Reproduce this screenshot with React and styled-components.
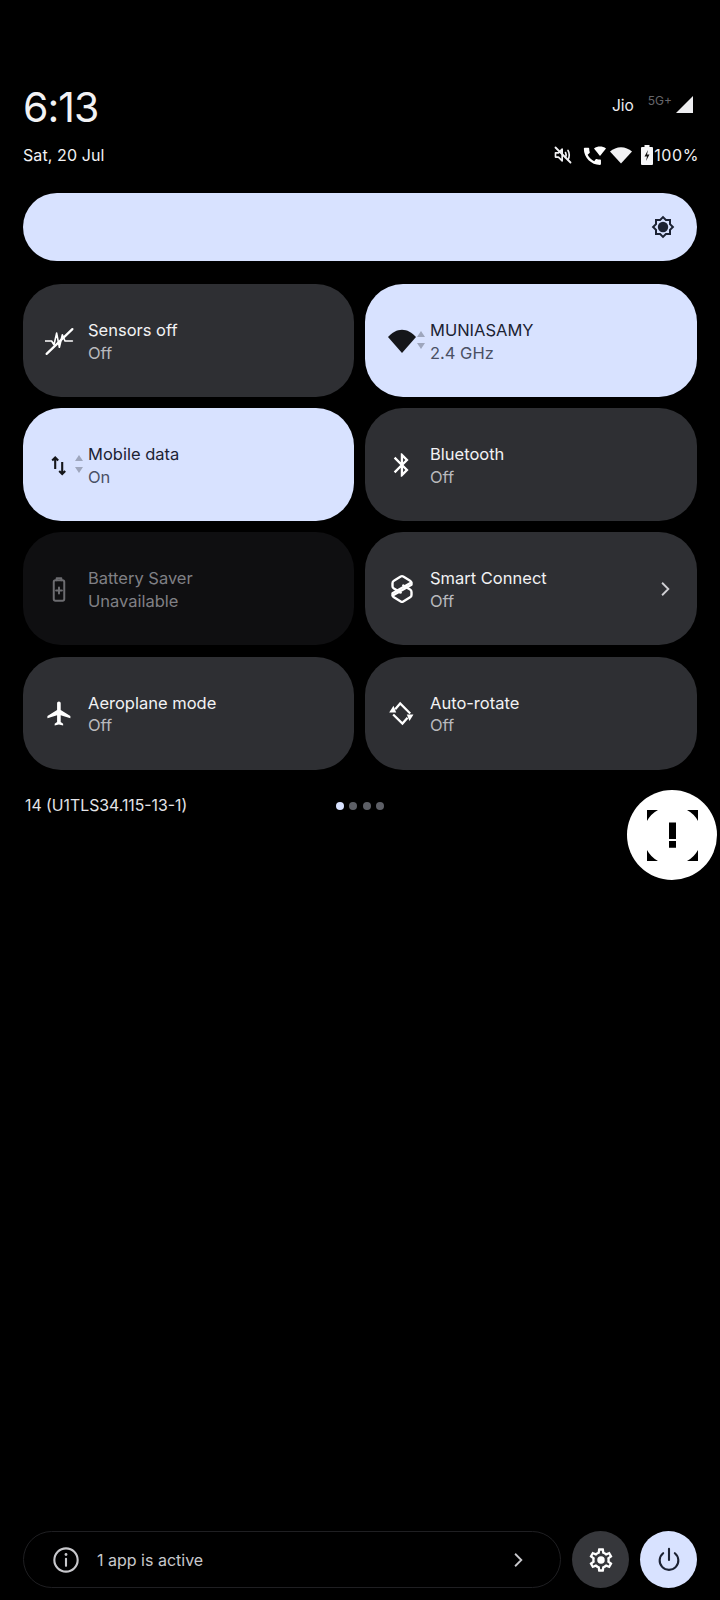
import React from 'react'
import styled, { createGlobalStyle } from 'styled-components'

const Global = createGlobalStyle`
    html, body { margin: 0; background: #000; }
    * { box-sizing: border-box; }
`;

const Page = styled.div`
    position: relative;
    width: 720px;
    height: 1600px;
    padding: 82px 23px 12px;
    display: flex;
    flex-direction: column;
    background: #000;
    font-family: Inter, "Liberation Sans", sans-serif;
    color: #f2f2f4;
`;

const TopRow = styled.div`
    display: flex;
    justify-content: space-between;
    align-items: center;
    height: 50px;
`;
const Clock = styled.div`
    font-size: 41px;
    letter-spacing: -1px;
    line-height: 50px;
    font-weight: 400;
`;
const Carrier = styled.div`
    display: flex;
    align-items: flex-start;
    height: 36px;
    color: #eeeef0;
    font-size: 15.5px;
    padding-top: 7px;
    margin-right: 4px;
`;
const CarrierName = styled.span`
    line-height: 20px;
`;
const NetType = styled.span`
    font-size: 12px;
    color: #66666a;
    margin: -3px 4px 0 14px;
`;
const SubRow = styled.div`
    display: flex;
    justify-content: space-between;
    align-items: center;
    height: 24px;
    margin-top: 11px;
`;
const DateText = styled.div`
    font-size: 16px;
    letter-spacing: 0.1px;
`;
const StatusIcons = styled.div`
    display: flex;
    align-items: center;
    margin-right: -2px;
`;
const BatteryText = styled.span`
    font-size: 16px;
    letter-spacing: 0.6px;
`;
const Brightness = styled.div`
    height: 68px;
    margin-top: 26px;
    border-radius: 34px;
    background: #d8e2ff;
    display: flex;
    align-items: center;
    justify-content: flex-end;
    padding-right: 22px;
    color: #1c2233;
`;
const Grid = styled.div`
    display: grid;
    grid-template-columns: 331px 332px;
    grid-auto-rows: 113px;
    column-gap: 11px;
    row-gap: 11.2px;
    margin-top: 23px;
`;

const tileBg = { off: '#2e2f33', on: '#d8e2ff', disabled: '#0f0f11' };
const tileTitle = { off: '#f2f2f4', on: '#1c2233', disabled: '#808085' };
const tileSub = { off: '#b9b9be', on: '#4a5064', disabled: '#808085' };
const tileIcon = { off: '#fff', on: '#15161a', disabled: '#6c6c70' };

const Tile = styled.div`
    position: relative;
    display: flex;
    align-items: center;
    border-radius: 38px;
    background: ${(p) => tileBg[p.$state]};
    color: ${(p) => tileTitle[p.$state]};
`;
const IconSlot = styled.div`
    position: relative;
    flex: 0 0 65px;
    padding-left: 22px;
    height: 28px;
    display: flex;
    align-items: center;
    color: ${(p) => tileIcon[p.$state]};
`;
const Steppers = styled.svg`
    position: absolute;
    left: 50px;
    top: 3px;
    width: 12px;
    height: 24px;
`;
const TileText = styled.div`
    flex: 1;
    font-size: 16.5px;
    line-height: 22.5px;
    margin-top: 2px;
`;
const TileSub = styled.div`
    color: ${(p) => tileSub[p.$state]};
`;
const TileChevron = styled.svg`
    margin-right: 22px;
    color: #d0d0d4;
`;
const VersionRow = styled.div`
    display: grid;
    grid-template-columns: 1fr auto 1fr;
    align-items: center;
    height: 24px;
    margin-top: 24px;
    padding-left: 2px;
`;
const Version = styled.div`
    font-size: 15.8px;
    color: #e4e4e8;
`;
const Dots = styled.div`
    display: flex;
    gap: 5.5px;
    margin-left: -2px;
`;
const Dot = styled.span`
    width: 8px;
    height: 8px;
    border-radius: 50%;
    background: ${(p) => (p.$on ? '#d8e2ff' : '#5d5f66')};
`;
const FloatButton = styled.div`
    position: absolute;
    left: 627px;
    top: 790px;
    width: 90px;
    height: 90px;
    border-radius: 50%;
    background: #fff;
    display: flex;
    align-items: center;
    justify-content: center;
`;
const Footer = styled.div`
    margin-top: auto;
    display: flex;
    align-items: center;
    gap: 11px;
`;
const ActivePill = styled.div`
    flex: 1;
    height: 57px;
    border: 1.5px solid #1f1f22;
    border-radius: 29px;
    display: flex;
    align-items: center;
    padding: 0 32px 0 28px;
    color: #c8c8cc;
    font-size: 16px;
`;
const PillText = styled.span`
    flex: 1;
    margin-left: 17px;
`;
const RoundButton = styled.div`
    width: 57px;
    height: 57px;
    border-radius: 50%;
    background: ${(p) => (p.$on ? '#d8e2ff' : '#36373b')};
    color: ${(p) => (p.$on ? '#1c2233' : '#fff')};
    display: flex;
    align-items: center;
    justify-content: center;
`;

const Ico = ({ size = 24, children, ...rest }) => (
    <svg width={size} height={size} viewBox="0 0 24 24" fill="currentColor" {...rest}>{children}</svg>
);
const Line = ({ size = 24, width = 2, children, ...rest }) => (
    <svg width={size} height={size} viewBox="0 0 24 24" fill="none" stroke="currentColor" strokeWidth={width} strokeLinecap="round" strokeLinejoin="round" {...rest}>{children}</svg>
);

const GEAR = "M19.43 12.98c.04-.32.07-.64.07-.98 0-.34-.03-.66-.07-.98l2.11-1.65c.19-.15.24-.42.12-.64l-2-3.46c-.09-.16-.26-.25-.44-.25-.06 0-.12.01-.17.03l-2.49 1c-.52-.4-1.08-.73-1.69-.98l-.38-2.65C14.46 2.18 14.25 2 14 2h-4c-.25 0-.46.18-.49.42l-.38 2.65c-.61.25-1.17.59-1.69.98l-2.49-1c-.06-.02-.12-.03-.18-.03-.17 0-.34.09-.43.25l-2 3.46c-.13.22-.07.49.12.64l2.11 1.65c-.04.32-.07.65-.07.98 0 .33.03.66.07.98l-2.11 1.65c-.19.15-.24.42-.12.64l2 3.46c.09.16.26.25.44.25.06 0 .12-.01.17-.03l2.49-1c.52.4 1.08.73 1.69.98l.38 2.65c.03.24.24.42.49.42h4c.25 0 .46-.18.49-.42l.38-2.65c.61-.25 1.17-.59 1.69-.98l2.49 1c.06.02.12.03.18.03.17 0 .34-.09.43-.25l2-3.46c.12-.22.07-.49-.12-.64l-2.11-1.65zm-1.98-1.71c.04.31.05.52.05.73 0 .21-.02.43-.05.73l-.14 1.13.89.7 1.08.84-.7 1.21-1.27-.51-1.04-.42-.9.68c-.43.32-.84.56-1.25.73l-1.06.43-.16 1.13-.2 1.35h-1.4l-.19-1.35-.16-1.13-1.06-.43c-.43-.18-.83-.41-1.23-.71l-.91-.7-1.06.43-1.27.51-.7-1.21 1.08-.84.89-.7-.14-1.13c-.03-.31-.05-.54-.05-.74s.02-.43.05-.73l.14-1.13-.89-.7-1.08-.84.7-1.21 1.27.51 1.04.42.9-.68c.43-.32.84-.56 1.25-.73l1.06-.43.16-1.13.2-1.35h1.39l.19 1.35.16 1.13 1.06.43c.43.18.83.41 1.23.71l.91.7 1.06-.43 1.27-.51.7 1.21-1.07.85-.89.7.14 1.13z";
const PHONE = "M20.01 15.38c-1.23 0-2.42-.2-3.53-.56-.35-.12-.74-.03-1.01.24l-1.57 1.97c-2.83-1.35-5.48-3.9-6.89-6.83l1.95-1.66c.27-.28.35-.67.24-1.02-.37-1.11-.56-2.3-.56-3.53 0-.54-.45-.99-.99-.99H4.19C3.65 3 3 3.24 3 3.99 3 13.28 10.73 21 20.01 21c.71 0 .99-.63.99-1.18v-3.45c0-.54-.45-.99-.99-.99z";

const SensorsIcon = () => (
    <Line size={30} width={1.3}>
        <path d="M0 12h5.3l1.9 3 2.1-9.3 2.2 11.3 2.4-10 2.1 5h5.9" />
        <path d="M1.3 22.3L21.9 2.5" strokeWidth={1.8} />
    </Line>
);
const WifiIcon = () => (
    <Ico size={30}><path d="M12 21.5L0.8 8.8C4 5.2 8 3 12 3s8 2.2 11.2 5.8z" /></Ico>
);
const DataIcon = () => (
    <Line size={24} width={2.1} strokeLinecap="butt" strokeLinejoin="miter">
        <path d="M10.2 16V4.5M7.2 7.5l3-3 3 3" />
        <path d="M17.2 9v12M14.2 18l3 3 3-3" />
    </Line>
);
const BluetoothIcon = () => (
    <Ico size={28}><path transform="translate(0.8 0)" d="M17.71 7.71L12 2h-1v7.59L6.41 5 5 6.41 10.59 12 5 17.59 6.41 19 11 14.41V22h1l5.71-5.71-4.3-4.29 4.3-4.29zM13 5.83l1.88 1.88L13 9.59V5.83zm1.88 10.46L13 18.17v-3.76l1.88 1.88z" /></Ico>
);
const BatterySaverIcon = () => (
    <Line size={28} width={1.7}>
        <rect x="7.5" y="4.5" width="9" height="17.5" rx="1.4" />
        <path d="M10 4.5V2.8h4v1.7" />
        <path d="M12 10.8v5M9.5 13.3h5" />
    </Line>
);
const LINK = "M11 14.8L5.5 11.6Q4.4 11 4.4 9.7V7.3Q4.4 6 5.5 5.4L11 2Q12 1.4 13 2L18.5 5.4Q19.6 6 19.6 7.3V8.6L4.6 17.2";
const SmartConnectIcon = () => (
    <Line size={30} width={1.9}>
        <path d={LINK} />
        <path d={LINK} transform="rotate(180 12 12)" />
    </Line>
);
const PlaneIcon = () => (
    <Ico size={29}><path d="M21 16v-2l-8-5V3.5c0-.83-.67-1.5-1.5-1.5S10 2.67 10 3.5V9l-8 5v2l8-2.5V19l-2 1.5V22l3.5-1 3.5 1v-1.5L13 19v-5.5l8 2.5z" /></Ico>
);
const RotateIcon = () => (
    <Line size={29} width={1.9} strokeLinecap="butt" strokeLinejoin="miter">
        <path d="M6.8 8.4L10.9 3.7 19.2 12" />
        <path d="M17 15.6L12.8 20.3 5.1 12.8" />
        <path d="M1.8 11.2h5.8L5.4 5.6z" fill="currentColor" stroke="none" />
        <path d="M21.9 12.8h-5.5l2.2 5.5z" fill="currentColor" stroke="none" />
    </Line>
);
const ChevronIcon = ({ size = 22, ...rest }) => (
    <Line size={size} width={2.2} strokeLinecap="butt" strokeLinejoin="miter" {...rest}><path d="M8.5 4.5l7.5 7.5-7.5 7.5" /></Line>
);

const tiles = [
    { title: 'Sensors off', sub: 'Off', state: 'off', Icon: SensorsIcon },
    { title: 'MUNIASAMY', sub: '2.4 GHz', state: 'on', Icon: WifiIcon, steppers: true },
    { title: 'Mobile data', sub: 'On', state: 'on', Icon: DataIcon, steppers: true },
    { title: 'Bluetooth', sub: 'Off', state: 'off', Icon: BluetoothIcon },
    { title: 'Battery Saver', sub: 'Unavailable', state: 'disabled', Icon: BatterySaverIcon },
    { title: 'Smart Connect', sub: 'Off', state: 'off', Icon: SmartConnectIcon, chevron: true },
    { title: 'Aeroplane mode', sub: 'Off', state: 'off', Icon: PlaneIcon },
    { title: 'Auto-rotate', sub: 'Off', state: 'off', Icon: RotateIcon },
];

function App() {
    return (
        <Page>
            <Global />
            <TopRow>
                <Clock>6:13</Clock>
                <Carrier>
                    <CarrierName>Jio</CarrierName>
                    <NetType>5G+</NetType>
                    <svg width="17" height="17" viewBox="0 0 18 18" fill="#eeeef0"><path d="M18 0v18H0z" /></svg>
                </Carrier>
            </TopRow>
            <SubRow>
                <DateText>Sat, 20 Jul</DateText>
                <StatusIcons>
                    <Line size={20} width={2} style={{ marginRight: 9 }}>
                        <path d="M3 9.5v5h3.5L11 19V5L6.5 9.5z" />
                        <path d="M15 9c1 1.8 1 4 0 6M18 6.5c2 3 2 8 0 11" />
                        <path d="M3 3l18 18" strokeWidth={2.2} />
                    </Line>
                    <svg width="26" height="22" viewBox="0 0 26 22" fill="#fff" style={{ marginRight: 1 }}>
                        <path d={PHONE} transform="translate(-1 1) scale(0.95)" />
                        <path d="M18 12L12 4.5c3.6-2.6 8.4-2.6 12 0z" />
                    </svg>
                    <Ico size={24} style={{ marginRight: 8, color: '#f2f2f4' }}><path d="M12 20.5L1 8.5C4 5.8 8 4.2 12 4.2s8 1.6 11 4.3z" /></Ico>
                    <svg width="12" height="20" viewBox="0 0 12 20" style={{ marginRight: 1 }}>
                        <path d="M3.5 0h5v2H11a1 1 0 0 1 1 1v16a1 1 0 0 1-1 1H1a1 1 0 0 1-1-1V3a1 1 0 0 1 1-1h2.5z" fill="#f6f6f8" />
                        <path d="M7 5L3.5 11.5H6L5 16l3.5-6.5H6z" fill="#111" />
                    </svg>
                    <BatteryText>100%</BatteryText>
                </StatusIcons>
            </SubRow>
            <Brightness>
                <Ico size={24}>
                    <path d="M20 8.69V4h-4.69L12 .69 8.69 4H4v4.69L.69 12 4 15.31V20h4.69L12 23.31 15.31 20H20v-4.69L23.31 12 20 8.69zm-2 5.79V18h-3.52L12 20.48 9.52 18H6v-3.52L3.52 12 6 9.52V6h3.52L12 3.52 14.48 6H18v3.52L20.48 12 18 14.48z" />
                    <circle cx="12" cy="12" r="5.2" />
                </Ico>
            </Brightness>
            <Grid>
                {tiles.map(({ title, sub, state, Icon, steppers, chevron }) => (
                    <Tile key={title} $state={state}>
                        <IconSlot $state={state}>
                            <Icon />
                            {steppers && (
                                <Steppers viewBox="0 0 12 24" fill="#9ea6bd">
                                    <path d="M6 1l4 6H2z" />
                                    <path d="M6 19l4-6H2z" />
                                </Steppers>
                            )}
                        </IconSlot>
                        <TileText>
                            {title}
                            <TileSub $state={state}>{sub}</TileSub>
                        </TileText>
                        {chevron && (
                            <TileChevron as={ChevronIcon} size={20} />
                        )}
                    </Tile>
                ))}
            </Grid>
            <VersionRow>
                <Version>14 (U1TLS34.115-13-1)</Version>
                <Dots>
                    <Dot $on />
                    <Dot />
                    <Dot />
                    <Dot />
                </Dots>
            </VersionRow>
            <FloatButton>
                <svg width="51" height="51" viewBox="0 0 51 51" fill="#000">
                    <path d="M0 0h11A27 27 0 0 0 0 11zM51 0H40A27 27 0 0 1 51 11zM0 51h11A27 27 0 0 1 0 40zM51 51H40A27 27 0 0 0 51 40z" />
                    <path d="M22 12.5h7V29h-7zM22 31h7v6.8h-7z" />
                </svg>
            </FloatButton>
            <Footer>
                <ActivePill>
                    <Line size={28} width={1.8}>
                        <circle cx="12" cy="12" r="10" />
                        <path d="M12 11v6" />
                        <path d="M12 7.2v.1" strokeWidth={2.4} />
                    </Line>
                    <PillText>1 app is active</PillText>
                    <ChevronIcon size={20} />
                </ActivePill>
                <RoundButton>
                    <Ico size={28}>
                        <path d={GEAR} />
                        <circle cx="12" cy="12" r="3.2" />
                    </Ico>
                </RoundButton>
                <RoundButton $on>
                    <Line size={28} width={1.8}>
                        <path d="M12 2.5v9.5" />
                        <path d="M7 6.2a8 8 0 1 0 10 0" />
                    </Line>
                </RoundButton>
            </Footer>
        </Page>
    )
}

export default App
